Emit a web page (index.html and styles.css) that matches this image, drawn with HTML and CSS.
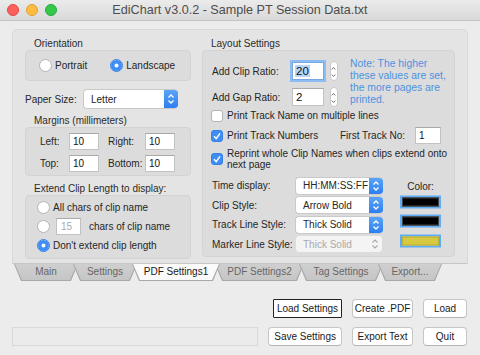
FILE: index.html
```html
<!DOCTYPE html>
<html lang="en">
<head>
    <meta charset="UTF-8">
    <title>EdiChart v3.0.2 - Sample PT Session Data.txt</title>
    <link rel="stylesheet" href="styles.css">
</head>
<body>
    <div class="titlebar">
        <div class="lights">
            <span class="light red"></span>
            <span class="light yellow"></span>
            <span class="light green"></span>
        </div>
        <div class="title">EdiChart v3.0.2 - Sample PT Session Data.txt</div>
        <div></div>
    </div>

    <div class="main">
        <div class="tabview">
            <!-- left column -->
            <div class="col left">
                <div class="glabel">Orientation</div>
                <div class="box orient">
                    <div class="radio"><span class="rb"></span>Portrait</div>
                    <div class="radio"><span class="rb on"></span>Landscape</div>
                </div>

                <div class="paper">
                    <span class="plabel">Paper Size:</span>
                    <div class="popup paper-pop">
                        <span class="ptext">Letter</span>
                        <span class="arrows"><svg width="8" height="12" viewBox="0 0 8 12"><path d="M1.5 4.5 L4 2 L6.5 4.5 M1.5 7.5 L4 10 L6.5 7.5" fill="none" stroke="#fff" stroke-width="1.3"/></svg></span>
                    </div>
                </div>

                <div class="glabel g2">Margins (millimeters)</div>
                <div class="box margins">
                    <span>Left:</span><span class="field m">10</span>
                    <span>Right:</span><span class="field m">10</span>
                    <span>Top:</span><span class="field m">10</span>
                    <span>Bottom:</span><span class="field m">10</span>
                </div>

                <div class="glabel g3">Extend Clip Length to display:</div>
                <div class="box extend">
                    <div class="radio"><span class="rb"></span>All chars of clip name</div>
                    <div class="radio"><span class="rb"></span><span class="field dim">15</span>chars of clip name</div>
                    <div class="radio"><span class="rb on"></span>Don't extend clip length</div>
                </div>
            </div>

            <!-- right column -->
            <div class="col right">
                <div class="glabel">Layout Settings</div>
                <div class="box layout">
                    <div class="ratios">
                        <div class="ratio-rows">
                            <div class="ratio">
                                <span class="rlabel">Add Clip Ratio:</span>
                                <span class="field r focus"><span class="selected">20</span></span>
                                <span class="stepper"><svg width="8" height="20" viewBox="0 0 8 20"><path d="M2 7 L4 5 L6 7 M2 13 L4 15 L6 13" fill="none" stroke="#555" stroke-width="1"/></svg></span>
                            </div>
                            <div class="ratio">
                                <span class="rlabel">Add Gap Ratio:</span>
                                <span class="field r">2</span>
                                <span class="stepper"><svg width="8" height="20" viewBox="0 0 8 20"><path d="M2 7 L4 5 L6 7 M2 13 L4 15 L6 13" fill="none" stroke="#555" stroke-width="1"/></svg></span>
                            </div>
                        </div>
                        <div class="note">Note: The higher these values are set, the more pages are printed.</div>
                    </div>

                    <div class="check"><span class="cb"></span>Print Track Name on multiple lines</div>
                    <div class="check numbers">
                        <span class="cb on"><svg width="12" height="12" viewBox="0 0 12 12"><path d="M3 6.3 L5.2 8.6 L9 3.4" fill="none" stroke="#fff" stroke-width="1.5"/></svg></span>
                        <span>Print Track Numbers</span>
                        <span class="first">First Track No:</span>
                        <span class="field ft">1</span>
                    </div>
                    <div class="check two">
                        <span class="cb on"><svg width="12" height="12" viewBox="0 0 12 12"><path d="M3 6.3 L5.2 8.6 L9 3.4" fill="none" stroke="#fff" stroke-width="1.5"/></svg></span>
                        <span>Reprint whole Clip Names when clips extend onto next page</span>
                    </div>

                    <div class="styles">
                        <span class="slabel">Time display:</span>
                        <div class="popup">
                            <span class="ptext">HH:MM:SS:FF</span>
                            <span class="arrows"><svg width="8" height="12" viewBox="0 0 8 12"><path d="M1.5 4.5 L4 2 L6.5 4.5 M1.5 7.5 L4 10 L6.5 7.5" fill="none" stroke="#fff" stroke-width="1.3"/></svg></span>
                        </div>
                        <span class="clabel">Color:</span>

                        <span class="slabel">Clip Style:</span>
                        <div class="popup">
                            <span class="ptext">Arrow Bold</span>
                            <span class="arrows"><svg width="8" height="12" viewBox="0 0 8 12"><path d="M1.5 4.5 L4 2 L6.5 4.5 M1.5 7.5 L4 10 L6.5 7.5" fill="none" stroke="#fff" stroke-width="1.3"/></svg></span>
                        </div>
                        <span class="well"><span class="swatch black"></span></span>

                        <span class="slabel">Track Line Style:</span>
                        <div class="popup">
                            <span class="ptext">Thick Solid</span>
                            <span class="arrows"><svg width="8" height="12" viewBox="0 0 8 12"><path d="M1.5 4.5 L4 2 L6.5 4.5 M1.5 7.5 L4 10 L6.5 7.5" fill="none" stroke="#fff" stroke-width="1.3"/></svg></span>
                        </div>
                        <span class="well"><span class="swatch black"></span></span>

                        <span class="slabel">Marker Line Style:</span>
                        <div class="popup off">
                            <span class="ptext">Thick Solid</span>
                            <span class="arrows"><svg width="8" height="12" viewBox="0 0 8 12"><path d="M1.5 4.5 L4 2 L6.5 4.5 M1.5 7.5 L4 10 L6.5 7.5" fill="none" stroke="#aaa" stroke-width="1.1"/></svg></span>
                        </div>
                        <span class="well"><span class="swatch yellow"></span></span>
                    </div>
                </div>
            </div>
        </div>

        <div class="tabs">
            <span class="tab">Main</span>
            <span class="tab">Settings</span>
            <span class="tab sel">PDF Settings1</span>
            <span class="tab">PDF Settings2</span>
            <span class="tab">Tag Settings</span>
            <span class="tab">Export...</span>
        </div>

        <div class="bottom">
            <div class="status"></div>
            <div class="buttons">
                <span class="btn focus">Load Settings</span>
                <span class="btn">Create .PDF</span>
                <span class="btn">Load</span>
                <span class="btn">Save Settings</span>
                <span class="btn">Export Text</span>
                <span class="btn">Quit</span>
            </div>
        </div>
    </div>
</body>
</html>
```

FILE: styles.css
```css
body {
    margin: 0;
    width: 480px;
    height: 355px;
    overflow: hidden;
    background-color: #ececec;
    font-family: "Liberation Sans", Arial, sans-serif;
    font-size: 10px;
    color: #262626;
    white-space: nowrap;
}

/* title bar */
.titlebar {
    height: 20px;
    display: grid;
    grid-template-columns: 1fr auto 1fr;
    align-items: center;
    background: linear-gradient(#ebebeb, #d9d9d9);
    border-bottom: 1px solid #c4c4c4;
}
.lights {
    display: flex;
    gap: 7px;
    padding-left: 7px;
}
.light {
    width: 12px;
    height: 12px;
    border-radius: 50%;
    box-sizing: border-box;
}
.red { background: #fc605c; border: 1px solid #de4a46; }
.yellow { background: #fdbc40; border: 1px solid #dea034; }
.green { background: #34c84a; border: 1px solid #27aa37; }
.title {
    font-size: 12.6px;
    color: #4d4d4d;
}

.main {
    padding: 8px 12px 0 12px;
}

/* tab view content */
.tabview {
    height: 225px;
    display: flex;
    gap: 11px;
    padding: 8px 12px 0 12px;
    background-color: #e4e4e4;
    border: 1px solid #d8d8d8;
    border-bottom: 1px solid #c6c6c6;
    border-radius: 5px 5px 0 0;
}
.col {
    display: flex;
    flex-direction: column;
}
.left { width: 166px; }
.right { width: 253px; }
.glabel {
    height: 12px;
    line-height: 12px;
    padding-left: 9px;
    color: #2a2a2a;
}
.g2 { margin-top: 6px; }
.g3 { margin-top: 7px; }
.box {
    box-sizing: border-box;
    background-color: #dcdcdc;
    border: 1px solid #d3d3d3;
    border-radius: 4px;
}

/* radios */
.radio {
    display: flex;
    align-items: center;
    gap: 3px;
    height: 16px;
}
.rb {
    width: 13px;
    height: 13px;
    box-sizing: border-box;
    border-radius: 50%;
    background: #fff;
    border: 1px solid #b4b4b4;
    flex-shrink: 0;
}
.rb.on {
    border-color: #2f7de0;
    box-shadow: inset 0 0 0 3.5px #3f8ef5;
    background-color: #fff;
}
.orient {
    height: 31px;
    display: flex;
    align-items: center;
    gap: 23px;
    padding-left: 13px;
}
.extend {
    height: 64px;
    padding: 3px 0 0 11px;
    display: flex;
    flex-direction: column;
    gap: 3px;
}
.extend .field.dim {
    width: 25px;
    height: 17px;
    margin: 0 5px 0 3px;
    padding-left: 4px;
    color: #aaa;
}

/* text fields */
.field {
    box-sizing: border-box;
    display: inline-flex;
    align-items: center;
    padding-left: 3px;
    background: #fff;
    border: 1px solid #c2c2c2;
    border-top-color: #a9a9a9;
    font-size: 10px;
    color: #111;
}

/* paper size */
.paper {
    margin-top: 8px;
    height: 20px;
    display: flex;
    align-items: center;
}
.plabel {
    width: 58px;
}
.popup {
    box-sizing: border-box;
    height: 18px;
    display: flex;
    align-items: center;
    background: #fff;
    border-radius: 4px;
    border: 1px solid #c9c9c9;
    border-right: none;
    overflow: hidden;
}
.popup .ptext {
    flex: 1;
    padding-left: 7px;
}
.popup .arrows {
    width: 14px;
    height: 100%;
    display: flex;
    align-items: center;
    justify-content: center;
    background: linear-gradient(#5aa4f7, #2d7ff0);
}
.paper-pop {
    width: 95px;
    height: 20px;
}
.popup.off {
    background: #f4f4f4;
    border-color: #dcdcdc;
    border-right: 1px solid #dcdcdc;
    color: #a9a9a9;
}
.popup.off .arrows {
    background: none;
}

/* margins */
.margins {
    height: 49px;
    display: grid;
    grid-template-columns: 29px 39px 37px 30px;
    grid-auto-rows: 17px;
    row-gap: 5px;
    align-items: center;
    padding: 5px 0 0 14px;
}
.field.m {
    width: 30px;
    height: 17px;
}

/* layout settings */
.layout {
    height: 207px;
    padding: 10px 0 0 8px;
}
.ratios {
    display: flex;
}
.ratio-rows {
    display: flex;
    flex-direction: column;
    gap: 6px;
}
.ratio {
    display: flex;
    align-items: center;
    height: 20px;
}
.rlabel {
    width: 80px;
    padding-left: 1px;
}
.field.r {
    width: 32px;
    height: 18px;
    font-size: 11.5px;
}
.field.focus {
    box-shadow: 0 0 0 2px #8cbcf4;
    border-color: #7aa8e0;
    padding-left: 2px;
}
.selected {
    background: #b5d5fb;
    padding: 0 1px;
}
.stepper {
    margin-left: 6px;
    width: 8px;
    height: 20px;
    box-sizing: border-box;
    display: flex;
    background: #fff;
    border: 1px solid #c9c9c9;
    border-radius: 4px;
}
.stepper svg {
    margin-left: -1px;
}
.note {
    margin: -3px 0 0 12px;
    width: 108px;
    line-height: 12px;
    color: #4c92e0;
    white-space: normal;
    font-size: 10.4px;
}

.check {
    display: flex;
    align-items: center;
    gap: 4px;
    height: 13px;
    margin-top: 2px;
}
.cb {
    width: 12px;
    height: 12px;
    box-sizing: border-box;
    background: #fff;
    border: 1px solid #b4b4b4;
    border-radius: 3px;
    flex-shrink: 0;
}
.cb.on {
    background: #3f8ef5;
    border-color: #3380e8;
}
.cb svg {
    display: block;
    margin: -1px;
}
.numbers {
    margin-top: 7px;
}
.numbers .first {
    margin-left: auto;
    margin-right: 6px;
}
.field.ft {
    width: 26px;
    height: 17px;
    margin-right: 13px;
}
.two {
    margin-top: 5px;
    height: 24px;
    line-height: 11px;
    white-space: normal;
}

.styles {
    margin-top: 5px;
    display: grid;
    grid-template-columns: 83px 88px 58px;
    grid-auto-rows: 19.5px;
    align-items: center;
    padding-left: 1px;
}
.styles .popup {
    height: 18px;
}
.clabel {
    margin-left: 17px;
    text-align: center;
    transform: translateY(1px);
}
.well {
    margin-left: 17px;
    height: 13px;
    box-sizing: border-box;
    border: 2px solid #5eacf6;
    display: flex;
    transform: translateY(-3.5px);
}
.swatch {
    flex: 1;
    border: 1px solid #444;
}
.black { background: #000; }
.yellow.swatch { background: #d6c940; border-color: #b8ae3c; }

/* tabs */
.tabs {
    display: flex;
    padding-left: 2px;
    height: 17px;
}
.tab {
    position: relative;
    height: 17px;
    line-height: 15px;
    text-align: center;
    color: #666;
    margin-right: -5px;
    background: #a8a8a8;
    clip-path: polygon(0 0, 100% 0, calc(100% - 7px) 100%, 7px 100%);
    z-index: 1;
}
.tab::before {
    content: "";
    position: absolute;
    inset: 0 1px 1px 1px;
    background: linear-gradient(#cfcfcf, #c6c6c6);
    clip-path: polygon(0 0, 100% 0, calc(100% - 7px) 100%, 7px 100%);
    z-index: -1;
}
.tab:nth-child(1) { width: 64px; }
.tab:nth-child(2) { width: 64px; }
.tab:nth-child(3) { width: 88px; }
.tab:nth-child(4) { width: 89px; }
.tab:nth-child(5) { width: 84px; }
.tab:nth-child(6) { width: 64px; }
.tab.sel {
    color: #1a1a1a;
    z-index: 2;
}
.tab.sel::before {
    background: #fafafa;
}

/* bottom area */
.bottom {
    display: flex;
    align-items: flex-end;
    margin-top: 18px;
}
.status {
    width: 246px;
    height: 19px;
    box-sizing: border-box;
    background: #ebebeb;
    border: 1px solid #d9d9d9;
}
.buttons {
    margin-left: auto;
    margin-right: 1px;
    display: grid;
    grid-template-columns: 69px 61px 44px;
    grid-auto-rows: 19px;
    column-gap: 10px;
    row-gap: 9px;
    justify-items: end;
}
.btn {
    box-sizing: border-box;
    height: 19px;
    padding: 0 5px;
    display: flex;
    align-items: center;
    justify-content: center;
    background: #fff;
    border: 1px solid #c6c6c6;
    border-bottom-color: #b3b3b3;
    border-radius: 4px;
    color: #1a1a1a;
}
.buttons .btn:nth-child(2),
.buttons .btn:nth-child(5) { width: 61px; }
.buttons .btn:nth-child(3),
.buttons .btn:nth-child(6) { width: 44px; margin-left: 2px; }
.btn.focus {
    width: 69px;
    border: 1px solid #222;
    border-radius: 1px;
}
```
